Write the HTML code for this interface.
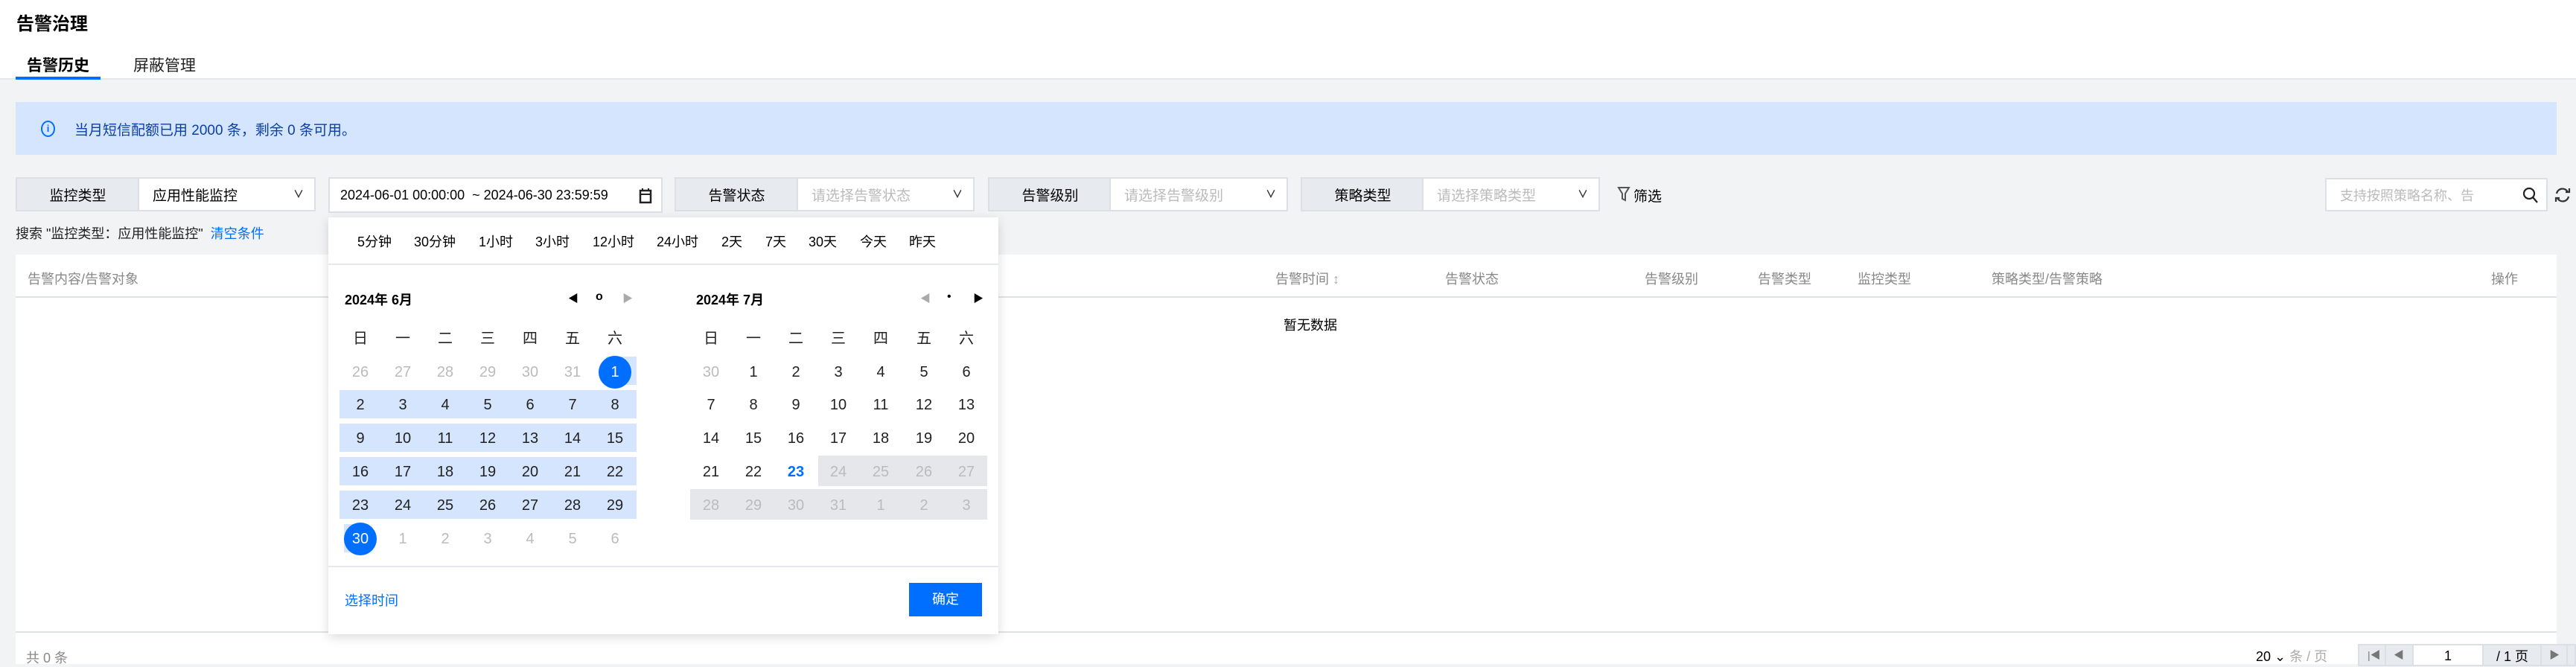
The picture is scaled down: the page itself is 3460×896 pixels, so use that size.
<!DOCTYPE html>
<html><head><meta charset="utf-8"><style>
*{margin:0;padding:0;box-sizing:border-box}
body{width:3460px;height:892px;overflow:hidden;background:#f2f3f5;font-family:"Liberation Sans","Noto Sans CJK SC",sans-serif;color:#000;font-size:19px;position:relative}
.a{position:absolute;white-space:nowrap}
.lbl{position:absolute;background:#e7eaef;border:2px solid #dcdfe6;border-right:none;display:flex;align-items:center;justify-content:center;font-size:19px;color:#000}
.sel{position:absolute;background:#fff;border:2px solid #dcdfe6;display:flex;align-items:center;padding-left:18px;font-size:19px}
.ph{color:#bbb}
.chev{position:absolute;right:14px;top:11px;font-size:14px;color:#333;font-weight:bold}
.th{position:absolute;top:361px;font-size:18px;color:#888}
.d{position:absolute;width:50px;text-align:center;font-size:20px;color:#222;line-height:24px}
.g{color:#bbb}
</style></head><body>
<div class="a" style="left:0;top:0;width:3460px;height:107px;background:#fff;border-bottom:2px solid #e5e7eb"></div>
<div class="a" style="left:22px;top:12px;font-size:24px;font-weight:bold">告警治理</div>
<div class="a" style="left:36px;top:72px;font-size:21px;font-weight:bold">告警历史</div>
<div class="a" style="left:21px;top:103px;width:114px;height:4px;background:#006eff"></div>
<div class="a" style="left:179px;top:72px;font-size:21px;color:#222">屏蔽管理</div>

<div class="a" style="left:21px;top:137px;width:3413px;height:71px;background:#d5e5fd"></div>
<div class="a" style="left:55px;top:162px;width:19px;height:22px;border:2px solid #006eff;border-radius:50%;color:#006eff;font-size:13px;font-weight:bold;text-align:center;line-height:18px">i</div>
<div class="a" style="left:100px;top:160px;font-size:19px;color:#0a3fa8">当月短信配额已用 2000 条，剩余 0 条可用。</div>

<div class="lbl" style="left:21px;top:238px;width:165px;height:46px">监控类型</div>
<div class="sel" style="left:185px;top:238px;width:239px;height:46px">应用性能监控<span class="chev">∨</span></div>
<div class="sel" style="left:441px;top:238px;width:449px;height:48px;font-size:18px;padding-left:14px">2024-06-01 00:00:00 &nbsp;~ 2024-06-30 23:59:59
<svg style="position:absolute;right:12px;top:12px" width="18" height="22" viewBox="0 0 18 22"><rect x="2" y="4" width="14" height="16" fill="none" stroke="#222" stroke-width="2.5"/><line x1="2" y1="9" x2="16" y2="9" stroke="#222" stroke-width="2"/><line x1="5" y1="1" x2="5" y2="5" stroke="#222" stroke-width="2"/><line x1="13" y1="1" x2="13" y2="5" stroke="#222" stroke-width="2"/></svg></div>
<div class="lbl" style="left:906px;top:238px;width:165px;height:46px">告警状态</div>
<div class="sel" style="left:1070px;top:238px;width:239px;height:46px"><span class="ph">请选择告警状态</span><span class="chev">∨</span></div>
<div class="lbl" style="left:1327px;top:238px;width:165px;height:46px">告警级别</div>
<div class="sel" style="left:1490px;top:238px;width:240px;height:46px"><span class="ph">请选择告警级别</span><span class="chev">∨</span></div>
<div class="lbl" style="left:1747px;top:238px;width:165px;height:46px">策略类型</div>
<div class="sel" style="left:1910px;top:238px;width:239px;height:46px"><span class="ph">请选择策略类型</span><span class="chev">∨</span></div>
<svg class="a" style="left:2172px;top:250px" width="18" height="22" viewBox="0 0 18 22"><path d="M2 2h14l-5 8v9l-4-2v-7z" fill="none" stroke="#555" stroke-width="2"/></svg>
<div class="a" style="left:2194px;top:249px;font-size:19px">筛选</div>
<div class="sel" style="left:3123px;top:239px;width:299px;height:45px;font-size:18px"><span class="ph">支持按照策略名称、告</span>
<svg style="position:absolute;right:10px;top:10px" width="22" height="24" viewBox="0 0 22 24"><circle cx="9" cy="9" r="7" fill="none" stroke="#222" stroke-width="2.2"/><line x1="14" y1="14" x2="20" y2="21" stroke="#222" stroke-width="2.2"/></svg></div>
<svg class="a" style="left:3430px;top:249px" width="24" height="26" viewBox="0 0 24 26"><path d="M19 9A8 8 0 0 0 4 11M5 17a8 8 0 0 0 15-2" fill="none" stroke="#333" stroke-width="2.2"/><path d="M16 9h5V4M8 17H3v5" fill="none" stroke="#333" stroke-width="2.2"/></svg>

<div class="a" style="left:21px;top:300px;font-size:18px;color:#222">搜索 "监控类型：应用性能监控" <span style="color:#006eff">&nbsp;清空条件</span></div>

<div class="a" style="left:21px;top:342px;width:3413px;height:550px;background:#fff"></div>
<div class="a" style="left:21px;top:398px;width:3413px;height:2px;background:#dfe2e6"></div>
<div class="th" style="left:37px">告警内容/告警对象</div>
<div class="th" style="left:1713px">告警时间 <span style="color:#aaa">↕</span></div>
<div class="th" style="left:1941px">告警状态</div>
<div class="th" style="left:2209px">告警级别</div>
<div class="th" style="left:2361px">告警类型</div>
<div class="th" style="left:2495px">监控类型</div>
<div class="th" style="left:2675px">策略类型/告警策略</div>
<div class="th" style="left:3346px">操作</div>
<div class="a" style="left:1724px;top:423px;font-size:18px">暂无数据</div>
<div class="a" style="left:21px;top:848px;width:3413px;height:2px;background:#dfe2e6"></div>
<div class="a" style="left:35px;top:870px;font-size:18px;color:#888">共 0 条</div>
<div class="a" style="left:3030px;top:868px;font-size:18px">20 ⌄ <span style="color:#aaa">条 / 页</span></div>
<div class="a" style="left:3167px;top:865px;width:293px;height:30px;background:#e7eaef;border:2px solid #dcdfe6"></div>
<div class="a" style="left:3203px;top:865px;width:2px;height:30px;background:#dcdfe6"></div>
<div class="a" style="left:3240px;top:865px;width:96px;height:30px;background:#fff;border:2px solid #dcdfe6;text-align:center;font-size:18px;padding-top:4px">1</div>
<div class="a" style="left:3412px;top:865px;width:2px;height:30px;background:#dcdfe6"></div>
<div class="a" style="left:3447px;top:865px;width:2px;height:30px;background:#dcdfe6"></div>
<div class="a" style="left:3180px;top:870px;font-size:14px;color:#777">|◀</div>
<div class="a" style="left:3215px;top:870px;font-size:14px;color:#777">◀</div>
<div class="a" style="left:3353px;top:868px;font-size:18px">/ 1 页</div>
<div class="a" style="left:3424px;top:870px;font-size:14px;color:#777">▶</div>

<div class="a" style="left:441px;top:292px;width:900px;height:560px;background:#fff;box-shadow:0 4px 14px rgba(0,0,0,.14)"></div>
<div class="a" style="left:441px;top:354px;width:900px;height:2px;background:#e5e8ec"></div>
<div class="a" style="left:441px;top:760px;width:900px;height:2px;background:#e5e8ec"></div>
<div class="a" style="left:480px;top:311px;font-size:18px">5分钟</div>
<div class="a" style="left:556px;top:311px;font-size:18px">30分钟</div>
<div class="a" style="left:643px;top:311px;font-size:18px">1小时</div>
<div class="a" style="left:719px;top:311px;font-size:18px">3小时</div>
<div class="a" style="left:796px;top:311px;font-size:18px">12小时</div>
<div class="a" style="left:882px;top:311px;font-size:18px">24小时</div>
<div class="a" style="left:969px;top:311px;font-size:18px">2天</div>
<div class="a" style="left:1028px;top:311px;font-size:18px">7天</div>
<div class="a" style="left:1086px;top:311px;font-size:18px">30天</div>
<div class="a" style="left:1155px;top:311px;font-size:18px">今天</div>
<div class="a" style="left:1221px;top:311px;font-size:18px">昨天</div>
<div class="a" style="left:463px;top:389px;font-size:18px;font-weight:bold">2024年 6月</div>
<div class="a" style="left:763px;top:391px;font-size:14px">◀</div>
<div class="a" style="left:800px;top:390px;font-size:16px;font-weight:bold">o</div>
<div class="a" style="left:836px;top:391px;font-size:14px;color:#aaa">▶</div>
<div class="a" style="left:935px;top:389px;font-size:18px;font-weight:bold">2024年 7月</div>
<div class="a" style="left:1236px;top:391px;font-size:14px;color:#aaa">◀</div>
<div class="a" style="left:1272px;top:390px;font-size:16px">•</div>
<div class="a" style="left:1307px;top:391px;font-size:14px">▶</div>
<div class="a" style="left:814px;top:479px;width:41px;height:38px;background:#d5e5fd"></div>
<div class="a" style="left:456px;top:524px;width:399px;height:38px;background:#d5e5fd"></div>
<div class="a" style="left:456px;top:569px;width:399px;height:38px;background:#d5e5fd"></div>
<div class="a" style="left:456px;top:614px;width:399px;height:38px;background:#d5e5fd"></div>
<div class="a" style="left:456px;top:659px;width:399px;height:38px;background:#d5e5fd"></div>
<div class="a" style="left:462px;top:704px;width:28px;height:38px;background:#d5e5fd"></div>
<div class="a" style="left:804px;top:478px;width:44px;height:44px;border-radius:50%;background:#006eff"></div>
<div class="a" style="left:462px;top:702px;width:44px;height:44px;border-radius:50%;background:#006eff"></div>
<div class="a" style="left:1099px;top:612px;width:227px;height:41px;background:#e5e7eb"></div>
<div class="a" style="left:927px;top:657px;width:399px;height:41px;background:#e5e7eb"></div>
<div id="cal"></div>
<div class="a" style="left:463px;top:793px;font-size:18px;color:#006eff">选择时间</div>
<div class="a" style="left:1221px;top:783px;width:98px;height:45px;background:#006eff;color:#fff;font-size:18px;text-align:center;line-height:45px">确定</div>
<script>
var c=document.getElementById('cal'),h='';
var wk=['日','一','二','三','四','五','六'];
function cell(x,y,t,cls,st){h+='<div class="d '+(cls||'')+'" style="left:'+(x-25)+'px;top:'+(y-12)+'px;'+(st||'')+'">'+t+'</div>';}
var L=[484,541,598,655,712,769,826],R=[955,1012,1069,1126,1183,1241,1298],Y=[500,544,589,634,679,724];
for(var i=0;i<7;i++){cell(L[i],455,wk[i]);cell(R[i],455,wk[i]);}
var jun=[26,27,28,29,30,31,1];for(i=0;i<7;i++)cell(L[i],Y[0],jun[i],i<6?'g':'', i==6?'color:#fff':'');
var n=2;for(var r=1;r<5;r++)for(i=0;i<7;i++)cell(L[i],Y[r],n++);
cell(L[0],Y[5],30,'','color:#fff');for(i=1;i<7;i++)cell(L[i],Y[5],i,'g');
var jul=[30,1,2,3,4,5,6];for(i=0;i<7;i++)cell(R[i],Y[0],jul[i],i==0?'g':'');
n=7;for(r=1;r<3;r++)for(i=0;i<7;i++)cell(R[i],Y[r],n++);
for(i=0;i<7;i++){var v=21+i;cell(R[i],Y[3],v,v>23?'g':'',v==23?'color:#006eff;font-weight:bold':'');}
var l=[28,29,30,31,1,2,3];for(i=0;i<7;i++)cell(R[i],Y[4],l[i],'g');
c.innerHTML=h;
</script>
</body></html>
